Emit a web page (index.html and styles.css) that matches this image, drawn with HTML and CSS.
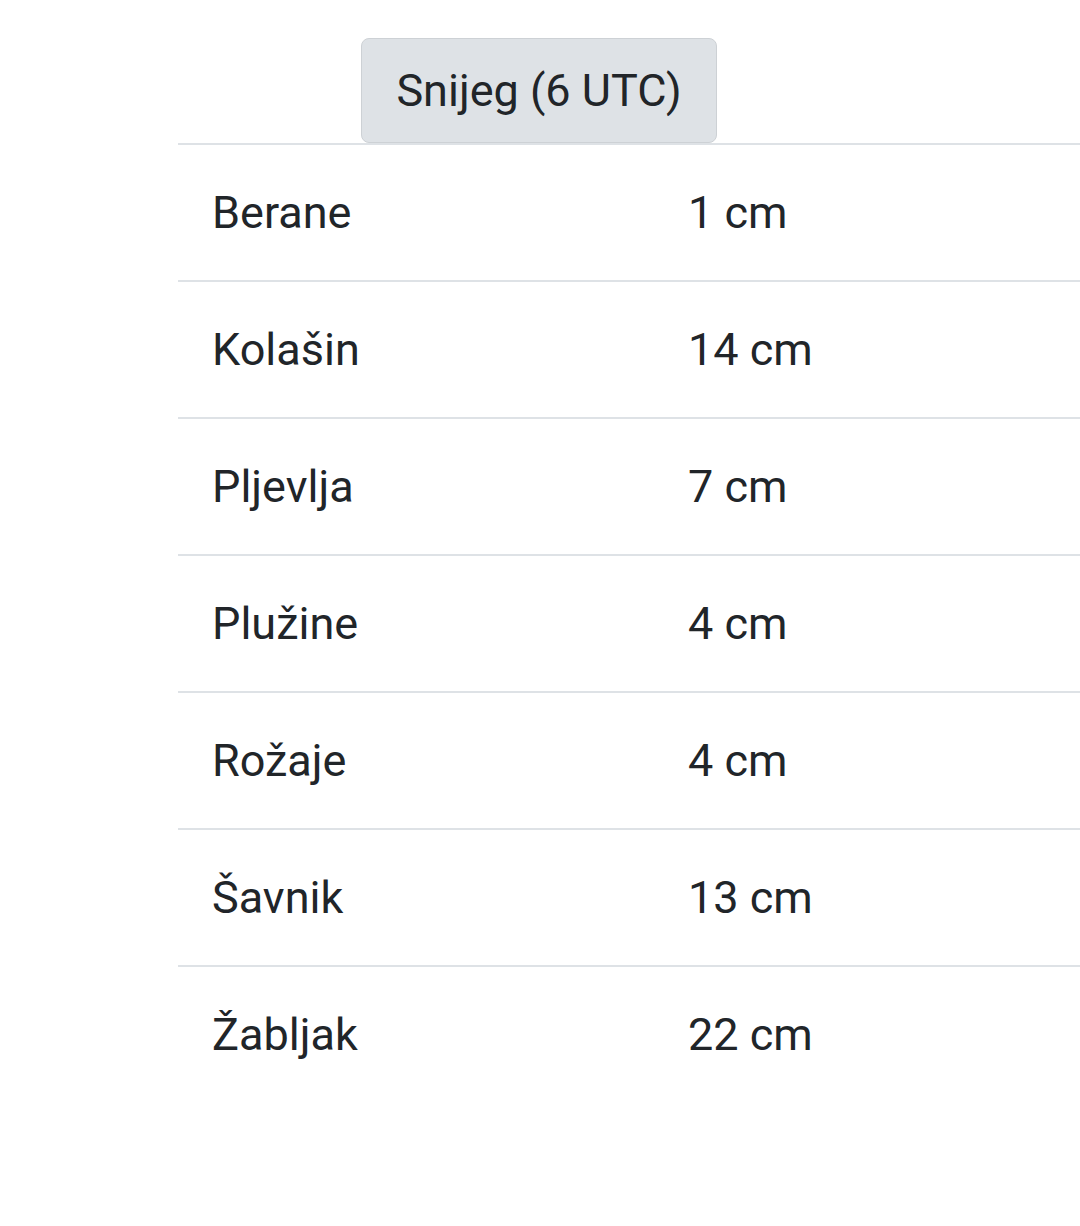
FILE: index.html
```html
<!DOCTYPE html>
<html lang="sr">
<head>
<meta charset="utf-8">
<link rel="stylesheet" href="styles.css">
</head>
<body>
<div class="wrap">
  <div class="head">
    <button class="tab">Snijeg (6 UTC)</button>
  </div>
  <div class="table">
    <div class="row"><span class="c1">Berane</span><span class="c2">1 cm</span></div>
    <div class="row"><span class="c1">Kolašin</span><span class="c2">14 cm</span></div>
    <div class="row"><span class="c1">Pljevlja</span><span class="c2">7 cm</span></div>
    <div class="row"><span class="c1">Plužine</span><span class="c2">4 cm</span></div>
    <div class="row"><span class="c1">Rožaje</span><span class="c2">4 cm</span></div>
    <div class="row"><span class="c1">Šavnik</span><span class="c2">13 cm</span></div>
    <div class="row"><span class="c1">Žabljak</span><span class="c2">22 cm</span></div>
  </div>
</div>
</body>
</html>
```
FILE: styles.css
```css
html, body {
  margin: 0;
  padding: 0;
  background: #ffffff;
}
body {
  font-family: Roboto, "Liberation Sans", sans-serif;
  color: #212529;
}
.wrap {
  padding-left: 178px;
  padding-top: 38px;
}
.head {
  display: flex;
  padding-left: 183px;
}
.tab {
  font-family: Roboto, "Liberation Sans", sans-serif;
  font-size: 45px;
  color: #212529;
  background: #dee2e6;
  border: 1px solid #cdd1d5;
  border-radius: 8px;
  width: 356px;
  height: 105px;
  padding: 0;
  margin: 0;
}
.table {
  display: flex;
  flex-direction: column;
}
.row {
  display: grid;
  grid-template-columns: 476px 1fr;
  align-items: center;
  height: 135px;
  border-top: 2px solid #dee2e6;
  padding: 0 34px;
  font-size: 45px;
  line-height: 1.2;
}
```
